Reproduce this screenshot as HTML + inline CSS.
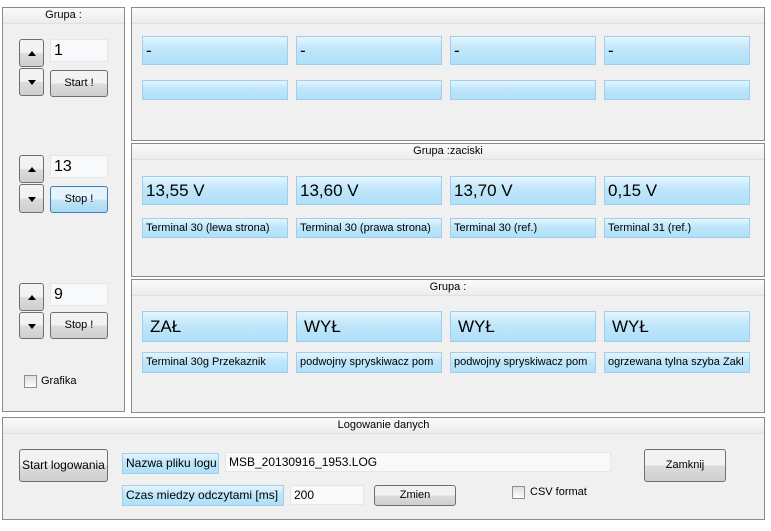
<!DOCTYPE html><html><head><style>
body{margin:0;width:771px;height:531px;background:#fff;font-family:"Liberation Sans",sans-serif;position:relative;overflow:hidden}
div{position:absolute;box-sizing:border-box}
.p{border:1px solid #8a8a8a;background:#f0f0f0}
.h{left:0;right:0;top:0;height:16px;background:linear-gradient(#fafafa,#ececec);border-bottom:1px solid #e0e0e0;font-size:11px;text-align:center;line-height:14px;color:#000}
.c{border:1px solid #9fcfee;background:linear-gradient(#e6f5fd,#bfe6fa 45%,#b0e0f9);color:#000;padding-left:3px;white-space:nowrap;overflow:hidden}
.big{height:29px;font-size:17px;line-height:28px}
.sm{height:20px;font-size:11px;line-height:19px}
.b{border:1px solid #707070;border-radius:3px;background:linear-gradient(#f2f2f2 50%,#dcdcdc 50%,#cfcfcf);font-size:11px;text-align:center}
.t{background:#f8f9fa;border:1px solid #e3e6ea;font-size:16px;padding-left:3px}
.ar{width:0;height:0;border-left:4px solid transparent;border-right:4px solid transparent;left:8px}
.cb{width:13px;height:13px;border:1px solid #8f8f8f;background:linear-gradient(#dedede,#fff)}
</style></head><body>
<div class="p" style="left:2px;top:7px;width:123px;height:405px"><div class="h">Grupa :</div>
</div>
<!-- spinners -->
<div class="b" style="left:19px;top:39px;width:25px;height:28px"><div class="ar" style="top:11px;border-bottom:5px solid #000"></div></div>
<div class="b" style="left:19px;top:68px;width:25px;height:28px"><div class="ar" style="top:11px;border-top:5px solid #000"></div></div>
<div class="t" style="left:50px;top:39px;width:58px;height:23px;line-height:21px">1</div>
<div class="b" style="left:50px;top:70px;width:58px;height:27px;line-height:25px">Start !</div>
<div class="b" style="left:19px;top:155px;width:25px;height:28px"><div class="ar" style="top:11px;border-bottom:5px solid #000"></div></div>
<div class="b" style="left:19px;top:184px;width:25px;height:29px"><div class="ar" style="top:12px;border-top:5px solid #000"></div></div>
<div class="t" style="left:50px;top:155px;width:58px;height:23px;line-height:21px">13</div>
<div class="b" style="left:50px;top:186px;width:58px;height:27px;line-height:25px;border-color:#3c7fb1;background:linear-gradient(#e5f4fc 50%,#c4e5f6 50%,#a8d8f3)">Stop !</div>
<div class="b" style="left:19px;top:283px;width:25px;height:28px"><div class="ar" style="top:11px;border-bottom:5px solid #000"></div></div>
<div class="b" style="left:19px;top:312px;width:25px;height:27px"><div class="ar" style="top:11px;border-top:5px solid #000"></div></div>
<div class="t" style="left:50px;top:283px;width:58px;height:23px;line-height:21px">9</div>
<div class="b" style="left:50px;top:312px;width:58px;height:27px;line-height:25px">Stop !</div>
<div class="cb" style="left:24px;top:375px"></div><div style="left:41px;top:375px;font-size:11px">Grafika</div>

<div class="p" style="left:131px;top:7px;width:634px;height:134px"><div class="h"></div></div>
<div class="p" style="left:131px;top:143px;width:634px;height:134px"><div class="h">Grupa :zaciski</div></div>
<div class="p" style="left:131px;top:279px;width:634px;height:134px"><div class="h">Grupa :</div></div>

<div class="c big" style="left:142px;top:36px;width:146px">-</div>
<div class="c big" style="left:296px;top:36px;width:146px">-</div>
<div class="c big" style="left:450px;top:36px;width:146px">-</div>
<div class="c big" style="left:604px;top:36px;width:146px">-</div>
<div class="c sm" style="left:142px;top:80px;width:146px"></div>
<div class="c sm" style="left:296px;top:80px;width:146px"></div>
<div class="c sm" style="left:450px;top:80px;width:146px"></div>
<div class="c sm" style="left:604px;top:80px;width:146px"></div>

<div class="c big" style="left:142px;top:176px;width:146px">13,55 V</div>
<div class="c big" style="left:296px;top:176px;width:146px">13,60 V</div>
<div class="c big" style="left:450px;top:176px;width:146px">13,70 V</div>
<div class="c big" style="left:604px;top:176px;width:146px">0,15 V</div>
<div class="c sm" style="left:142px;top:218px;width:146px">Terminal 30 (lewa strona)</div>
<div class="c sm" style="left:296px;top:218px;width:146px">Terminal 30 (prawa strona)</div>
<div class="c sm" style="left:450px;top:218px;width:146px">Terminal 30 (ref.)</div>
<div class="c sm" style="left:604px;top:218px;width:146px">Terminal 31 (ref.)</div>

<div class="c big" style="left:142px;top:311px;width:146px;height:31px;padding-left:7px;line-height:30px">ZAŁ</div>
<div class="c big" style="left:296px;top:311px;width:146px;height:31px;padding-left:7px;line-height:30px">WYŁ</div>
<div class="c big" style="left:450px;top:311px;width:146px;height:31px;padding-left:7px;line-height:30px">WYŁ</div>
<div class="c big" style="left:604px;top:311px;width:146px;height:31px;padding-left:7px;line-height:30px">WYŁ</div>
<div class="c sm" style="left:142px;top:352px;width:146px;height:21px">Terminal 30g Przekaznik</div>
<div class="c sm" style="left:296px;top:352px;width:146px;height:21px">podwojny spryskiwacz pom</div>
<div class="c sm" style="left:450px;top:352px;width:146px;height:21px">podwojny spryskiwacz pom</div>
<div class="c sm" style="left:604px;top:352px;width:146px;height:21px">ogrzewana tylna szyba Zakl</div>

<div class="p" style="left:2px;top:417px;width:763px;height:103px"><div class="h">Logowanie danych</div></div>
<div class="b" style="left:19px;top:449px;width:89px;height:33px;line-height:31px;font-size:12px">Start logowania</div>
<div class="c" style="left:122px;top:453px;width:97px;height:21px;font-size:12px;line-height:19px">Nazwa pliku logu</div>
<div class="t" style="left:225px;top:452px;width:386px;height:20px;font-size:12px;line-height:18px">MSB_20130916_1953.LOG</div>
<div class="c" style="left:122px;top:485px;width:162px;height:21px;font-size:12px;line-height:19px">Czas miedzy odczytami [ms]</div>
<div class="t" style="left:290px;top:485px;width:74px;height:20px;font-size:12px;line-height:18px">200</div>
<div class="b" style="left:374px;top:485px;width:82px;height:21px;line-height:19px">Zmien</div>
<div class="cb" style="left:512px;top:486px"></div><div style="left:530px;top:486px;font-size:11px">CSV format</div>
<div class="b" style="left:644px;top:449px;width:82px;height:33px;line-height:31px">Zamknij</div>
</body></html>
